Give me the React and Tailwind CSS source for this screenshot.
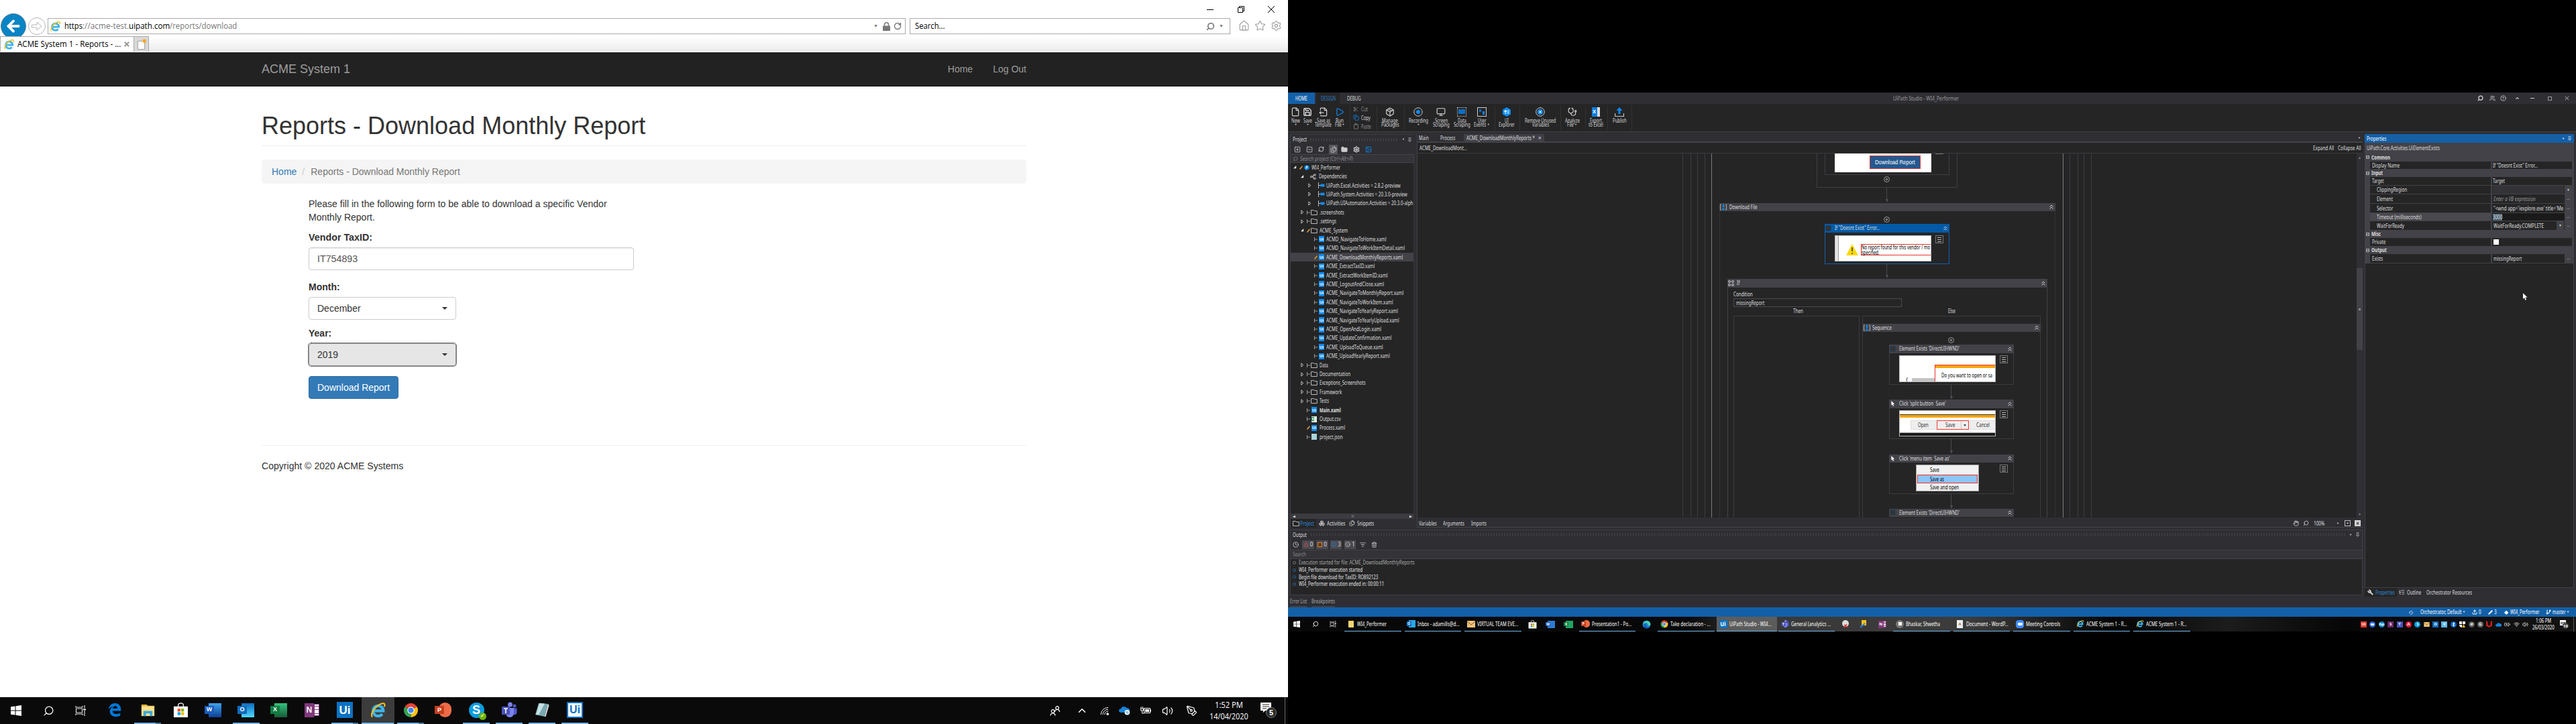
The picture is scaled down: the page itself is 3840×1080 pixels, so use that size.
import React, { useLayoutEffect, useRef, useState } from "react";
import {
  Home, Star, Settings, RotateCw, Search, File, Save, Play, Scissors, Copy, Clipboard,
  Package, Circle, Monitor, Stethoscope, Upload, Folder,
  RefreshCw, Trash2, Clock, AlertTriangle, Info, ListFilter, Wrench, ListTree, GitBranch, Pencil,
  Hand, CircleHelp, Pin, SquarePlus, SquareMinus, Image, Boxes, Users, Network, Files,
  ChevronUp, Volume2, Wifi, BatteryCharging, PenTool, FileOutput, ArrowLeft, Bluetooth,
} from "lucide-react";

/* Single line of text whose glyphs are condensed to a given width. */
function T({ w, className = "", children }) {
  const ref = useRef(null);
  const [s, setS] = useState(1);
  useLayoutEffect(() => {
    const n = ref.current.offsetWidth;
    if (n) setS(w / n);
  }, [w]);
  return (
    <span className={"inline-block shrink-0 overflow-visible text-left " + className} style={{ width: w }}>
      <span ref={ref} className="inline-block origin-left whitespace-pre" style={{ transform: `scaleX(${s})` }}>{children}</span>
    </span>
  );
}

/* ---------- logos ---------- */
const IE = ({ className }) => (
  <svg viewBox="0 0 24 24" className={className} fill="none">
    <path d="M5.500 12.800H19.500A7.300 7.300 0 1 0 18 17.400" stroke="#3fb4ea" strokeWidth="4" />
    <path d="M4 21.500C0 18 9 4 18.500 2.200c4-.6 3.300 2.800 2.500 4.800" stroke="#f6c21c" strokeWidth="2" />
  </svg>
);
const OldEdge = ({ className }) => (
  <svg viewBox="0 0 24 24" className={className}>
    <path fill="#0078d7" d="M2 10.500C3 4.500 7.500 1 12.500 1 18.500 1 22 5.500 22 11v2.500H8.500c.2 3.500 3 5 6 5 2.500 0 4.500-.6 6.500-1.700v4.500c-2.300 1.200-4.700 1.700-7.200 1.700C8 23 4 19.500 4 14.500c0-3.300 2-6.300 5-8-1.500.2-4.700 1.300-7 4zM8.700 9.500h7.800c0-2.200-1.300-3.700-3.700-3.700-2.300 0-3.700 1.700-4.100 3.700z" />
  </svg>
);
const NewEdge = ({ className }) => (
  <svg viewBox="0 0 24 24" className={className}>
    <circle cx="12" cy="12" r="11" fill="#1b7fd0" />
    <path d="M2 9C5 1 19-1 23 10c0 4-3 6-8 5 2-3 0-7-5-7-4 0-7 1-8 4z" fill="#4bd0b0" />
    <path d="M9 13c0 6 6 9 12 6-3 4-8 5-12 3-4-3-5-11 2-13-1 1-2 2-2 4z" fill="#0c4fa0" />
  </svg>
);
const Chrome = ({ className }) => (
  <svg viewBox="0 0 24 24" className={className}>
    <path d="M12 12L2.500 6.500A11 11 0 0 1 21.500 6.500z" fill="#e54335" />
    <path d="M12 12L21.500 6.500A11 11 0 0 1 12 23z" fill="#fbc116" />
    <path d="M12 12L12 23A11 11 0 0 1 2.500 6.500z" fill="#34a353" />
    <circle cx="12" cy="12" r="5.400" fill="#fff" /><circle cx="12" cy="12" r="4.200" fill="#4286f4" />
  </svg>
);
const Win = ({ className }) => (
  <svg viewBox="0 0 16 16" className={className} fill="#fff">
    <path d="M0 2.300L6.500 1.400V7.500H0zM7.500 1.200L16 0V7.500H7.500zM0 8.500H6.500v6.100L0 13.700zM7.500 8.500H16V16L7.500 14.800z" />
  </svg>
);
const TaskView = ({ className }) => (
  <svg viewBox="0 0 16 16" className={className} fill="none" stroke="#ddd" strokeWidth="1.200">
    <path d="M1.500 5h9v6h-9zM1 1v2h10V1M1 15v-2h10v2M14 0v4M14 8v8" /><path d="M12.800 5.500h2.400v1.500h-2.400z" fill="#ddd" />
  </svg>
);
const Store = ({ className }) => (
  <svg viewBox="0 0 24 24" className={className}>
    <path d="M8 7V4q0-3 4-3t4 3v3" fill="none" stroke="#ddd" strokeWidth="1.500" />
    <path d="M1 6h22v17H1z" fill="#fff" />
    <path d="M7 9.500h4.500v4.500H7z" fill="#f25022" /><path d="M12.500 9.500H17v4.500h-4.500z" fill="#7fba00" />
    <path d="M7 15h4.500v4.500H7z" fill="#00a4ef" /><path d="M12.500 15H17v4.500h-4.500z" fill="#ffb900" />
  </svg>
);
const FolderLogo = ({ className }) => (
  <svg viewBox="0 0 24 24" className={className}>
    <path d="M2 3h8l2 2h10v15H2z" fill="#e9b93c" /><path d="M2 6h20v15H2z" fill="#fbe08b" />
    <path d="M5 21v-8h14v8h-4v-4H9v4z" fill="#39a9e0" />
  </svg>
);
const Skype = ({ className }) => (
  <div className={"relative flex items-center justify-center rounded-full bg-[#0a9de0] font-bold text-white " + className}>
    <span className="text-[18px] leading-none">S</span>
    <span className="absolute -bottom-[3px] -right-[3px] flex size-[11px] items-center justify-center rounded-full bg-[#6bb700] text-[8px] leading-none">✓</span>
  </div>
);
const Teams = ({ className }) => (
  <svg viewBox="0 0 24 24" className={className}>
    <circle cx="20" cy="6" r="2.500" fill="#5059c9" /><circle cx="13.500" cy="4" r="3.500" fill="#7b83eb" />
    <path d="M17 9.500h6.500V16q-1 4-5 3z" fill="#5059c9" /><path d="M8 9h11v8q-1 6-6 6t-6-6z" fill="#7b83eb" />
    <path d="M1 7h12v12H1z" fill="#4b53bc" /><path d="M4 10h6M7 10v7" stroke="#fff" strokeWidth="1.600" />
  </svg>
);
const Notepad = ({ className }) => (
  <svg viewBox="0 0 24 24" className={className}>
    <path d="M7 2l14 1-5 19L2 19z" fill="#7ba9b0" /><path d="M8 2l8 .5-9 17-4-.6z" fill="#c5e2e5" /><path d="M21 3l1.500 2-5 17-1.500 0z" fill="#e7e7e7" />
  </svg>
);
/* OneNote: white notebook with tabs behind a purple cover. */
const OneNote = ({ className }) => (
  <div className={"flex shrink-0 items-center " + className}>
    <span className="flex h-full w-[62%] items-center justify-center bg-[#80397b] font-bold leading-none text-white">N</span>
    <span className="flex h-[82%] w-[38%] flex-col justify-around border border-[#80397b] bg-white"><i className="h-px bg-[#80397b]" /><i className="h-px bg-[#80397b]" /><i className="h-px bg-[#80397b]" /></span>
  </div>
);
/* Office tile: coloured sheet behind a lettered square. */
const Office = ({ l, size, sheet, tag, letter, round = "" }) => (
  <div className={"flex shrink-0 items-center justify-end " + size}>
    <div className={"flex h-full w-[80%] items-center " + sheet + " " + round}>
      <div className={"-ml-[30%] flex h-[58%] w-[72%] shrink-0 items-center justify-center font-bold text-white " + tag}>
        <span className={"leading-none " + letter}>{l}</span>
      </div>
    </div>
  </div>
);
const Ui = ({ className }) => <span className={"flex shrink-0 items-center justify-center font-bold leading-none " + className}>Ui</span>;

/* ---------- left screen ---------- */
const leftTasks = [
  [<OldEdge className="size-[22px]" />, 0],
  [<FolderLogo className="size-[23px]" />, 2],
  [<Store className="size-[23px]" />, 0],
  [<Office l="W" size="h-[21px] w-6" sheet="bg-gradient-to-b from-[#41a5ee] to-[#103f91]" tag="bg-[#185abd]" letter="text-[9px]" />, 0],
  [<Office l="O" size="h-[21px] w-6" sheet="bg-gradient-to-b from-[#0f6cbd] to-[#50d9ff]" tag="bg-[#0f6cbd]" letter="text-[9px]" />, 1],
  [<Office l="X" size="h-[21px] w-6" sheet="bg-gradient-to-b from-[#33c481] to-[#185c37]" tag="bg-[#107c41]" letter="text-[9px]" />, 0],
  [<OneNote className="h-[21px] w-[22px] text-[12px]" />, 0],
  [<Ui className="size-6 bg-[#0a72c4] text-[17px] text-white" />, 2],
  [<IE className="size-[25px]" />, 3],
  [<Chrome className="size-[23px]" />, 2],
  [<Office l="P" size="h-[22px] w-6" sheet="bg-[#ed6c47]" round="rounded-full" tag="bg-[#c43e1c]" letter="text-[9px]" />, 0],
  [<Skype className="size-[23px]" />, 1],
  [<Teams className="size-6" />, 1],
  [<Notepad className="size-6" />, 1],
  [<Ui className="size-6 border-2 border-[#0a72c4] bg-white text-[16px] text-[#0a72c4]" />, 1],
];

function Browser() {
  return (
    <section className="flex h-[1080px] w-[1920px] shrink-0 flex-col bg-white font-['Liberation_Sans',Arial,sans-serif] text-[14px] leading-5 text-[#333]">
      <div className="h-[54px] shrink-0 overflow-hidden font-['Open_Sans',sans-serif] text-black">
        <div className="flex h-[27px] items-center justify-end pr-[2px]">
          <span className="flex w-[45.500px] justify-center"><svg viewBox="0 0 10 10" className="size-[10px]"><path d="M0 5.500h10" stroke="#000" /></svg></span>
          <span className="flex w-[45.500px] justify-center"><svg viewBox="0 0 10 10" className="size-[10px]" fill="none" stroke="#000"><path d="M.5 2.500h7v7h-7zM2.500 2.500v-2h7v7h-2" /></svg></span>
          <span className="flex w-[45.500px] justify-center"><svg viewBox="0 0 10 10" className="size-[10px]"><path d="M0 0l10 10M10 0L0 10" stroke="#000" /></svg></span>
        </div>
        <div className="flex h-[27px] items-start">
          <span className="-mt-[7px] ml-[1px] flex size-[38px] shrink-0 items-center justify-center rounded-full border border-[#5a7f95] bg-[#0a84c4] text-white"><ArrowLeft size={26} strokeWidth={3.500} /></span>
          <span className="-mt-[1px] ml-[3px] flex size-[26px] shrink-0 items-center justify-center rounded-full border border-[#b5b5b5] text-[#b5b5b5]">
            <svg viewBox="0 0 16 16" className="size-4" fill="none" stroke="currentColor"><path d="M.5 6h7.500V2l7 6-7 6v-4H.5z" /></svg>
          </span>
          <div className="ml-[3px] flex h-6 w-[1279px] shrink-0 items-center border border-[#ababab] text-[12px]">
            <IE className="ml-[2px] size-[17px]" />
            <T w={27} className="ml-[5px]">https</T>
            <T w={69} className="text-[#777]">://acme-test.</T>
            <T w={61}>uipath.com</T>
            <T w={100} className="text-[#777]">/reports/download</T>
            <div className="flex-1" />
            <span className="text-[7px] text-[#777]">▼</span>
            <svg viewBox="0 0 11 13" className="ml-[7px] h-[13px] w-[11px]"><path d="M0 5.500h11V13H0z" fill="#777" /><path d="M2.500 6V3.500q0-2.700 3-2.700t3 2.700V6" fill="none" stroke="#777" strokeWidth="1.500" /></svg>
            <RotateCw className="ml-[5px] mr-[5px] text-[#777]" size={12} strokeWidth={3} />
          </div>
          <div className="ml-[6px] flex h-6 w-[478px] shrink-0 items-center border border-[#ababab] text-[12px]">
            <T w={44} className="ml-[7px]">Search...</T>
            <div className="flex-1" />
            <Search className="-scale-x-100 text-[#777]" size={13} strokeWidth={3} />
            <span className="ml-[6px] mr-[9px] text-[7px] text-[#777]">▼</span>
          </div>
          <div className="ml-[12px] mt-[3px] flex gap-[7px] text-[#999]">
            <Home size={17} strokeWidth={1.500} /><Star size={17} strokeWidth={1.500} /><Settings size={17} strokeWidth={1.500} />
          </div>
        </div>
      </div>
      <div className="flex h-6 shrink-0 border-b border-white bg-gradient-to-b from-white to-[#ebebeb] font-['Open_Sans',sans-serif] text-[12px] text-black">
        <div className="flex w-[200px] items-center border border-b-0 border-[#ababab] bg-white">
          <IE className="ml-1 size-[17px]" />
          <T w={154} className="ml-1">ACME System 1 - Reports - ...</T>
          <svg viewBox="0 0 10 10" className="ml-[5px] size-[8px]"><path d="M1 1l8 8M9 1L1 9" stroke="#999" strokeWidth="2.500" /></svg>
        </div>
        <div className="flex w-[22px] items-center justify-center border border-b-0 border-l-0 border-[#ababab] bg-[#d9d9d9]">
          <svg viewBox="0 0 16 18" className="h-[17px] w-[15px]"><path d="M2.500 3.500h11v13h-11z" fill="#fff" stroke="#999" /><path d="M13 0v7M9.500 3.500h7M10.500 1l5 5M15.500 1l-5 5" stroke="#f5a623" strokeWidth="1.300" /></svg>
        </div>
      </div>
      <nav className="flex h-[51px] shrink-0 items-center border-b border-[#080808] bg-[#222] px-[390px] text-[#9d9d9d]">
        <span className="text-[18px]">ACME System 1</span>
        <span className="ml-auto">Home</span><span className="ml-[30px]">Log Out</span>
      </nav>
      <main className="mx-[390px] flex-1">
        <h1 className="mt-[39px] border-b border-[#eee] pb-[9px] text-[36px] leading-[40px]">Reports - Download Monthly Report</h1>
        <div className="mt-5 flex h-9 items-center rounded bg-[#f5f5f5] px-[15px]">
          <span className="text-[#337ab7]">Home</span><span className="px-[9px] pl-[8px] text-[#ccc]">/</span><span className="text-[#777]">Reports - Download Monthly Report</span>
        </div>
        <form className="ml-[70px] mt-5 flex flex-col items-start">
          <p className="w-[455px]"><T w={445}>Please fill in the following form to be able to download a specific Vendor</T><br />Monthly Report.</p>
          <label className="mt-[10px] font-bold"><T w={95}>Vendor TaxID:</T></label>
          <div className="mt-[5px] flex h-[34px] w-[485px] items-center rounded border border-[#ccc] px-3 text-[#555] shadow-[inset_0_1px_1px_rgba(0,0,0,0.075)]"><T w={60}>IT754893</T></div>
          <label className="mt-[15px] font-bold">Month:</label>
          <div className="mt-[5px] flex h-[34px] w-[220px] items-center justify-between rounded border border-[#ccc] px-3">
            December<span className="border-x-4 border-t-4 border-x-transparent border-t-[#333]" />
          </div>
          <label className="mt-[10px] font-bold">Year:</label>
          <div className="mt-[5px] flex h-[34px] w-[220px] items-center justify-between rounded border border-[#8c8c8c] bg-[#e6e6e6] px-3 outline-1 outline-dotted outline-black">
            2019<span className="border-x-4 border-t-4 border-x-transparent border-t-[#333]" />
          </div>
          <div className="mt-[15px] flex h-[34px] w-[134px] items-center justify-center rounded border border-[#2e6da4] bg-[#337ab7] text-white"><T w={108}>Download Report</T></div>
        </form>
        <footer className="mt-[69px] border-t border-[#eee] pt-5"><T w={211}>Copyright © 2020 ACME Systems</T></footer>
      </main>
      <div className="flex h-10 shrink-0 bg-[#0a0a0a] text-white">
        <span className="flex w-12 items-center justify-center"><Win className="size-4" /></span>
        <span className="flex w-12 items-center justify-center"><Search size={17} strokeWidth={1.800} className="-scale-x-100" /></span>
        <span className="flex w-[50.500px] items-center pl-4"><TaskView className="size-4" /></span>
        {leftTasks.map(([icon, st], i) => (
          <span key={i} className={"flex w-[49px] flex-col items-center " + (st === 3 ? "bg-[#3c3c3c]" : "")}>
            <span className="flex h-[38px] items-center">{icon}</span>
            {st > 0 && <span className={"flex h-[2px] " + (st === 3 ? "w-[48px]" : "w-10") + " bg-[#76b9ed]"}>{st === 2 && <span className="ml-auto h-full w-2 bg-[#4a7599]" />}</span>}
          </span>
        ))}
        <div className="ml-auto flex items-center">
          <svg viewBox="0 0 15 15" className="size-[15px]" fill="none" stroke="#fff" strokeWidth="1.200"><circle cx="11" cy="3" r="2.300" /><path d="M7.500 9a3.500 3.500 0 0 1 7 0" /><circle cx="4.500" cy="8" r="2.300" /><path d="M1 14.500a3.500 3.500 0 0 1 7 0" /></svg>
          <ChevronUp className="ml-[24px]" size={18} strokeWidth={2} />
          <svg viewBox="0 0 14 14" className="ml-[18px] size-[13px]" fill="none" stroke="#fff"><path d="M1 13A12 12 0 0 1 13 1.500M4 13a9 9 0 0 1 9-8.500M7 13a6 6 0 0 1 6-5.500" /><circle cx="12" cy="12" r="1.500" fill="#fff" /></svg>
          <svg viewBox="0 0 18 14" className="ml-[15px] h-[14px] w-[17px]"><path d="M3 10a3 3 0 0 1 0-6 5 5 0 0 1 9-1 4 4 0 0 1 5 4v3z" fill="#1683d8" /><circle cx="13" cy="10" r="4" fill="#fff" /><path d="M10.500 9h4M15.500 11h-4" stroke="#1683d8" /></svg>
          <svg viewBox="0 0 17 14" className="ml-[15px] h-[14px] w-[17px]" fill="none" stroke="#fff"><path d="M5.500 3.500h9v7h-9zM15.500 5.500v3M1 1v3M3.500 1v3M.5 4h4v3h-4zM2.500 7v4h3" /><path d="M7 5h6v4H7z" fill="#fff" stroke="none" /></svg>
          <Volume2 className="ml-[15px]" size={17} strokeWidth={1.700} />
          <PenTool className="ml-[19px]" size={17} strokeWidth={1.700} />
          <div className="ml-[18px] flex w-[58px] flex-col items-center font-['Open_Sans',sans-serif] text-[12px] leading-[17px]">
            <T w={42}>1:52 PM</T><T w={58}>14/04/2020</T>
          </div>
          <div className="relative ml-[18px] mr-[11px] h-6 w-[25px]">
            <svg viewBox="0 0 16 15" className="mt-0 h-[15px] w-4"><path d="M0 0h16v12H7l-3 3v-3H0z" fill="#fff" /><path d="M3 3h10M3 6h10M3 9h6" stroke="#222" /></svg>
            <span className="absolute left-[8px] top-[7px] flex size-4 items-center justify-center rounded-full border border-[#777] bg-[#2a2a2a] text-[11px] font-bold">5</span>
          </div>
          <span className="mr-1 h-10 w-px bg-[#666]" />
        </div>
      </div>
    </section>
  );
}

/* ---------- ribbon ---------- */
const B = "text-[#0d8bf0]";
function Rib({ className, icon, l1, w1, l2, w2, caret }) {
  return (
    <div className={"flex shrink-0 flex-col items-center pt-[4px] " + className}>
      <div className="flex h-[15px] items-center">{icon}</div>
      <T w={w1} className="mt-px h-[7px] leading-[9px]">{l1}</T>
      <div className="flex h-[8px] items-center">
        {l2 && <T w={w2} className="leading-[8px]">{l2}</T>}
        {caret && <span className="ml-px text-[4px] leading-none">▼</span>}
      </div>
    </div>
  );
}
const Sep = ({ className }) => <span className={"-mr-px h-9 w-px shrink-0 self-center bg-[#333337] " + className} />;

function Ribbon() {
  return (
    <div className="flex h-[42px] shrink-0 border-b border-[#434348] bg-[#252526] text-[#d4d4d4]">
      <Rib className="ml-[2px] w-[18px]" icon={<File size={14} strokeWidth={2} />} l1="New" w1={13} caret />
      <Rib className="w-[18px]" icon={<Save size={14} strokeWidth={2.500} />} l1="Save" w1={12.5} caret />
      <Rib className="ml-px w-[27px]" icon={<FileOutput size={14} strokeWidth={2} />} l1="Save as" w1={20} l2="Template" w2={25} />
      <Rib className="ml-px w-5" icon={<Play className={B} size={14} strokeWidth={2} />} l1="Run" w1={12} l2="File" w2={10} caret />
      <Sep className="ml-[5px]" />
      <div className="ml-[5px] flex w-[35px] flex-col justify-center gap-[3px] leading-[10px]">
        <span className="flex items-center text-[#909090]"><Scissors size={8} className="mr-[4px]" /><T w={10}>Cut</T></span>
        <span className="flex items-center"><Copy size={9} className={"mr-[3px] " + B} /><T w={14}>Copy</T></span>
        <span className="flex items-center text-[#909090]"><Clipboard size={9} className="mr-[3px]" /><T w={15}>Paste</T></span>
      </div>
      <Sep className="ml-0" />
      <Rib className="ml-[5px] w-[30px]" icon={<Package size={14} strokeWidth={2} />} l1="Manage" w1={24} l2="Packages" w2={26.500} />
      <Sep className="ml-[6px]" />
      <Rib className="ml-[4px] w-[34px]" icon={<svg viewBox="0 0 14 14" className="size-[14px]"><circle cx="7" cy="7" r="6.200" fill="none" stroke="#ccc" /><circle cx="7" cy="7" r="3" fill="#0d8bf0" /></svg>} l1="Recording" w1={29} caret />
      <Rib className="ml-[3px] w-[28px]" icon={<Monitor size={14} strokeWidth={2} />} l1="Screen" w1={19} l2="Scraping" w2={25} />
      <Rib className="ml-[3px] w-[28px]" icon={<span className="flex size-[14px] items-center justify-center border border-dotted border-[#ccc]"><span className="h-[7px] w-[10px] bg-[#0d6fc0]" /></span>} l1="Data" w1={13} l2="Scraping" w2={25} />
      <Rib className="ml-[3px] w-[26px]" icon={<span className="flex size-[14px] items-end justify-end border border-[#ccc] p-[2px]"><span className="mb-auto mr-[2px] size-[4px] bg-[#0d6fc0]" /><span className="size-[5px] bg-[#0d8bf0]" /></span>} l1="User" w1={13} l2="Events" w2={18.500} caret />
      <Sep className="ml-[6px]" />
      <Rib className="ml-[5px] w-[26px]" icon={<svg viewBox="0 0 14 14" className="size-[14px]"><path d="M7 0l6 3.500v7L7 14l-6-3.500v-7z" fill="#0d8bf0" /><path d="M4 5h2.500v2H4zM8 5h2.500M8 7h2.500M4 9h2.500M8 9h2.500" stroke="#fff" fill="#fff" /></svg>} l1="UI" w1={6} l2="Explorer" w2={23.500} />
      <Sep className="ml-[6px]" />
      <Rib className="ml-[5px] w-[52px]" icon={<svg viewBox="0 0 14 14" className="size-[14px]"><circle cx="7" cy="7" r="6.300" fill="none" stroke="#ccc" /><circle cx="7" cy="7" r="4.300" fill="#0d8bf0" /><path d="M5.200 5.200l3.600 3.600M8.800 5.200L5.200 8.800" stroke="#fff" /></svg>} l1="Remove Unused" w1={46} l2="Variables" w2={25} />
      <Sep className="ml-[4px]" />
      <Rib className="ml-[5px] w-[25px]" icon={<Stethoscope size={14} strokeWidth={2} />} l1="Analyze" w1={22} l2="File" w2={10} caret />
      <Sep className="ml-[7px]" />
      <Rib className="ml-[4px] w-[23px]" icon={<span className="flex h-[14px] w-3 bg-[#ddd]"><span className="flex h-full w-2 items-center justify-center bg-[#0d7fe0] text-[7px] font-bold text-white">X</span></span>} l1="Export" w1={18} l2="to Excel" w2={22} />
      <Sep className="ml-[6px]" />
      <Rib className="ml-[6px] w-6" icon={<svg viewBox="0 0 14 14" className="size-[14px]"><path d="M7 0l4.500 5h-3v5h-3V5h-3z" fill="#0d8bf0" /><path d="M.5 9v4.500h13V9" fill="none" stroke="#ccc" strokeWidth="1.200" /></svg>} l1="Publish" w1={21} />
      <Sep className="ml-[6px]" />
    </div>
  );
}

/* ---------- project panel ---------- */
const tree = [
  ["root", "WI4_Performer", 43], ["dep", "Dependencies", 41.5],
  ["pkg", "UiPath.Excel.Activities = 2.8.2-preview", 110.7], ["pkg", "UiPath.System.Activities = 20.3.0-preview", 120.7], ["pkg", "UiPath.UIAutomation.Activities = 20.3.0-alph", 129.5],
  ["dir", ".screenshots", 36.5], ["dir", ".settings", 25], ["open", "ACME_System", 42],
  ["f", "ACMD_NavigateToHome.xaml", 89.6], ["f", "ACMD_NavigateToWorkItemDetail.xaml", 116.8], ["sel", "ACME_DownloadMonthlyReports.xaml", 114.3],
  ["f", "ACME_ExtractTaxID.xaml", 72], ["f", "ACME_ExtractWorkItemID.xaml", 91.5], ["f", "ACME_LogoutAndClose.xaml", 86.5],
  ["f", "ACME_NavigateToMonthlyReport.xaml", 115], ["f", "ACME_NavigateToWorkItem.xaml", 99.5], ["f", "ACME_NavigateToYearlyReport.xaml", 107],
  ["f", "ACME_NavigateToYearlyUpload.xaml", 109], ["f", "ACME_OpenAndLogin.xaml", 82], ["f", "ACME_UpdateConfirmation.xaml", 97.5],
  ["f", "ACME_UploadToQueue.xaml", 85], ["f", "ACME_UploadYearlyReport.xaml", 95],
  ["dir", "Data", 13], ["dir", "Documentation", 46.5], ["dir", "Exceptions_Screenshots", 69], ["dir", "Framework", 33], ["dir", "Tests", 14],
  ["main", "Main.xaml", 32], ["csv", "Output.csv", 32], ["proc", "Process.xaml", 38], ["json", "project.json", 34.5],
];
const Tri = ({ open }) => (
  <svg viewBox="0 0 6 8" className="h-[7px] w-[5px] shrink-0">{open ? <path d="M5 1v5H0z" fill="#eee" /> : <path d="M1 .8L4.500 4 1 7.200z" fill="none" stroke="#ddd" />}</svg>
);
const Tick = () => <svg viewBox="0 0 5 6" className="h-[6px] w-[5px] shrink-0"><path d="M.5 0v6M.5 3H5" stroke="#999" /></svg>;
const Pen = () => <svg viewBox="0 0 5 6" className="h-[6px] w-[5px] shrink-0"><path d="M.5 5.500L4.500 .8" stroke="#e8a33a" strokeWidth="1.500" /></svg>;
const Fold = () => <svg viewBox="0 0 10 8" className="h-[8px] w-[10px] shrink-0"><path d="M.5 7.500V.6h4l.8 1h4v5.900z" fill="none" stroke="#bbb" /></svg>;
const SmUi = () => <Ui className="h-[9px] w-[8px] bg-[#0d8bf0] text-[6px] text-white" />;

function Row({ kind, label, w }) {
  const file = kind === "f" || kind === "sel";
  return (
    <div className={"flex h-[13.420px] shrink-0 items-center overflow-hidden " + (kind === "sel" ? "bg-[#434248]" : "")}>
      {kind === "root" && <><span className="ml-[4px] flex"><Tri open /></span><span className="ml-[4px] flex"><Pen /></span><svg viewBox="0 0 9 9" className="ml-[2px] mr-[3px] size-[8px]"><path d="M4.500 0l4 2.200v4.600l-4 2.200-4-2.200V2.200z" fill="#0d8bf0" /><path d="M3.500 7V2.500h2v2h-2" stroke="#fff" fill="none" /></svg></>}
      {kind === "dep" && <><span className="ml-[15px] flex"><Tri open /></span><Network size={9} className="ml-[9px] mr-[3.500px] -rotate-90" /></>}
      {kind === "pkg" && <><span className="ml-[26px] flex"><Tri /></span><svg viewBox="0 0 10 9" className="ml-[10px] mr-[2px] h-[9px] w-[10px] shrink-0"><path d="M.5 0v9M.5 4.500H4" stroke="#bbb" /><path d="M3.500 2.500h6v4h-6z" fill="#0d8bf0" /></svg></>}
      {(kind === "dir" || kind === "open") && <><span className="ml-[15px] flex"><Tri open={kind === "open"} /></span><span className="ml-[4px] mr-px flex">{kind === "open" ? <Pen /> : <Tick />}</span><Fold /><span className="w-[2.500px] shrink-0" /></>}
      {file && <><span className="ml-[35px] mr-[2px] flex">{kind === "sel" ? <Pen /> : <Tick />}</span><SmUi /><span className="w-[3px] shrink-0" /></>}
      {["main", "csv", "proc", "json"].includes(kind) && (
        <><span className="ml-[24px] mr-[2px] flex">{kind === "proc" ? <Pen /> : <Tick />}</span>
          {kind === "csv" ? <span className="flex h-[9px] w-[8px] items-center bg-[#dfeee6] text-[6px] font-bold text-white"><span className="bg-[#107c41] leading-[6px]">X</span></span>
            : kind === "json" ? <span className="h-[9px] w-[8px] bg-[#a9d3da]" /> : <SmUi />}
          <span className="w-[3.500px] shrink-0" /></>
      )}
      <T w={w} className={kind === "main" ? "font-bold" : ""}>{label}</T>
    </div>
  );
}
const Dots = ({ className }) => <span className={"h-[5px] flex-1 bg-[radial-gradient(circle,#55555a_0.700px,transparent_0.900px)] bg-[size:4px_2.500px] " + className} />;

function ProjectPanel() {
  return (
    <div className="ml-[3px] mt-[3px] flex w-[185px] shrink-0 flex-col border-l border-[#434348]">
      <div className="flex h-[15px] items-center border-t border-[#3a3a3f] pl-[3px]">
        <T w={21}>Project</T><Dots className="ml-[4px]" /><span className="ml-[5px] text-[4px]">▼</span><Pin size={7} className="ml-[4px] mr-[3px]" />
      </div>
      <div className="flex h-[15px] items-center pl-[5px] text-[#d0d0d0]">
        <span className="flex w-[18px]"><SquarePlus size={10} /></span><span className="flex w-[18px]"><SquareMinus size={10} /></span><span className="flex w-[16px]"><RefreshCw size={9} strokeWidth={2.500} /></span>
        <span className="flex h-[14px] w-[13px] items-center justify-center bg-[#55555b]"><Files size={10} /></span>
        <span className="ml-[5px] flex w-[18px]"><Folder size={10} fill="#ccc" /></span><span className="flex w-[18px]"><Settings size={10} strokeWidth={3} /></span><Image size={10} className={B} />
      </div>
      <div className="flex h-[13px] items-center border border-l-0 border-[#434348] bg-[#333338] italic text-[#8a8a8a]"><Search size={8} className="ml-[3px] mr-[3px] -scale-x-100" /><T w={79}>Search project (Ctrl+Alt+P)</T></div>
      <div className="flex flex-1 flex-col overflow-hidden border-r border-[#333338] bg-[#252526]">
        {tree.map(([k, l, w], i) => <Row key={i} kind={k} label={l} w={w} />)}
      </div>
      <div className="flex h-[8px] items-center justify-between bg-[#3b3b40] px-[3px] text-[5px] leading-none"><span>◀</span><span className="flex gap-px"><i className="h-[4px] w-px bg-[#777]" /><i className="h-[4px] w-px bg-[#777]" /></span><span>▶</span></div>
      <div className="flex h-[13px] items-center">
        <div className="flex h-full w-[38px] items-center bg-[#252526]"><span className="ml-[3px] mr-[1px] flex"><Fold /></span><T w={21} className="text-[#2e8ad8]">Project</T></div>
        <Boxes size={9} className="ml-[4px] mr-[3px]" /><T w={27}>Activities</T>
        <Files size={9} className="ml-[6px] mr-[3px]" /><T w={25}>Snippets</T>
      </div>
    </div>
  );
}

/* ---------- workflow canvas: nodes placed by page position ---------- */
const OX = 2112, OY = 229;
const Box = ({ x, y, w, h, className = "", children }) => (
  <div className={"absolute " + className} style={{ left: x - OX, top: y - OY, width: w, height: h }}>{children}</div>
);
const Chev = () => <svg viewBox="0 0 6 7" className="h-[7px] w-[6px]" fill="none" stroke="#ccc"><path d="M.5 3.500L3 1l2.500 2.500M.5 6.500L3 4l2.500 2.500" /></svg>;
const Head = ({ x, y, w, label, tw, icon, blue }) => (
  <Box x={x} y={y} w={w} h={12.5} className={"flex items-center pr-[3px] " + (blue ? "bg-[#045aa6]" : "bg-[#434248]")}>
    <span className="flex w-[14.500px] shrink-0 pl-px">{icon}</span><T w={tw}>{label}</T><span className="ml-auto"><Chev /></span>
  </Box>
);
const Plus = ({ x, y }) => <Box x={x - 4.5} y={y - 4.5} w={9} h={9}><svg viewBox="0 0 9 9" className="size-[9px]" fill="none" stroke="#999"><circle cx="4.500" cy="4.500" r="4" /><path d="M4.500 2.500v4M2.500 4.500h4" /></svg></Box>;
const Arrow = ({ x, y, h }) => <Box x={x - 2.5} y={y} w={5} h={h} className="flex flex-col items-center"><span className="w-px flex-1 bg-[#4a4a4e]" /><span className="border-x-[2.500px] border-t-[5px] border-x-transparent border-t-[#505055]" /></Box>;
const Menu = ({ x, y }) => <Box x={x} y={y} w={12} h={12} className="flex flex-col justify-center gap-[2px] border border-[#777] px-[2px]"><span className="h-px bg-[#bbb]" /><span className="h-px bg-[#bbb]" /><span className="h-px bg-[#bbb]" /></Box>;
const SeqI = () => <svg viewBox="0 0 10 10" className="size-[10px]"><path d="M2 1H.5v8H2M8 1h1.500v8H8" stroke="#aaa" fill="none" /><path d="M4 .5h2v3h1L5 5.500 3 3.500h1zM3.500 6.500h3v3h-3z" fill="#0d8bf0" /></svg>;
const ElI = () => <svg viewBox="0 0 10 10" className="size-[9px]"><path d="M1 1h8v8H1z" stroke="#1d3d5c" fill="#333" /></svg>;
const Ptr = ({ className }) => <svg viewBox="0 0 8 12" className={className}><path d="M0 0v10l2.300-2.200L4 12l1.800-.8L4 7.200h3.500z" fill="#fff" /></svg>;
const lines = [[2507, 0], [2519, 0], [2528.500, 0], [2540, 0], [2549.500, 1], [3074, 1], [3084, 0], [3095.500, 0], [3105, 0], [3116, 0]];

function Canvas() {
  return (
    <div className="relative h-[543px] w-[1400px] shrink-0 overflow-hidden">
      {lines.map(([x, b], i) => <Box key={i} x={x} y={229} w={1} h={543} className={b ? "bg-[#7c7c7c]" : "bg-[#3c3c40]"} />)}
      <Box x={2707} y={220} w={210} h={60} className="border border-[#3f3f44]" />
      <Box x={2719} y={220} w={186} h={40.5} className="border border-[#3f3f44]" />
      <Box x={2733.5} y={229} w={144.5} h={28} className="bg-white">
        <div className="ml-[52px] mt-[3px] flex h-5 w-[76px] items-center justify-center border border-[#e8352d] bg-[#25598f] font-['Liberation_Sans',sans-serif] text-[8.500px] text-white"><T w={60}>Download Report</T></div>
      </Box>
      <Menu x={2884} y={218} />
      <Plus x={2811.5} y={267.5} />
      <Arrow x={2811.5} y={280} h={22} />
      <Box x={2562} y={303} w={500.5} h={480} className="border border-[#333337]" />
      <Head x={2562} y={302.5} w={500.5} label="Download File" tw={41.6} icon={<SeqI />} />
      <Plus x={2811.5} y={327.5} />
      <Box x={2719} y={334} w={185.5} h={60} className="border border-[#1460a8]" />
      <Head x={2719} y={334} w={185.5} label={'If "Doesnt Exist" Error...'} tw={67} icon={<ElI />} blue />
      <Box x={2733.5} y={351} w={144.5} h={39} className="overflow-hidden border border-[#bbb] bg-white text-black">
        <div className="flex h-full items-center">
          <span className="h-full w-[5px] shrink-0 border-r border-[#999] bg-[#e4e4e4]" />
          <svg viewBox="0 0 18 17" className="ml-[11px] mt-[4px] h-[17px] w-[18px] shrink-0"><path d="M9 0l9 17H0z" fill="#ffd800" /><path d="M9 5v6M9 13v2" stroke="#333" strokeWidth="1.500" /></svg>
          <div className="ml-[4px] mt-[4px] flex h-[17px] w-[110px] shrink-0 flex-col border border-[#e8352d] leading-[7.500px]"><T w={102}>No report found for this vendor / mo</T><T w={27}>specified.</T></div>
        </div>
      </Box>
      <Menu x={2884} y={351} />
      <Arrow x={2811.5} y={394} h={21} />
      <Box x={2573.5} y={416} w={477} h={370} className="border border-[#444449]" />
      <Head x={2573.5} y={416} w={477} label="If" tw={4} icon={<span className="grid grid-cols-2 gap-px"><i className="size-[4px] rounded-full border border-[#ccc]" /><i className="size-[4px] rounded-full border border-[#ccc]" /><i className="size-[4px] rounded-full border border-[#ccc]" /><i className="size-[4px] rounded-full border border-[#ccc]" /></span>} />
      <Box x={2583} y={433.5} w={60} h={10}><T w={29}>Condition</T></Box>
      <Box x={2583} y={445} w={250.5} h={13} className="flex items-center border border-[#4a4a50] pl-[3px]"><T w={42.5}>missingReport</T></Box>
      <Box x={2671.5} y={459} w={20} h={10}><T w={15}>Then</T></Box>
      <Box x={2902.5} y={459} w={20} h={10}><T w={11}>Else</T></Box>
      <Box x={2583} y={471} w={187.5} h={320} className="border border-[#3c3c40]" />
      <Box x={2774.5} y={471} w={266.5} h={320} className="border border-[#3c3c40]" />
      <Head x={2775.5} y={482.5} w={265} label="Sequence" tw={29} icon={<SeqI />} />
      <Plus x={2907.5} y={507.5} />

      <Box x={2815} y={514} w={185.5} h={60} className="border border-[#3c3c40]" />
      <Head x={2815} y={514} w={185.5} label="Element Exists 'DirectUIHWND'" tw={90} icon={<ElI />} />
      <Box x={2829.5} y={530} w={144.5} h={40} className="flex items-end overflow-hidden border border-[#bbb] bg-white text-black">
        <span className="ml-[10px] h-[5px] w-[9px] text-[8px] leading-[6px]">(</span><span className="h-[5px] w-[36px] bg-[#c4c4c4]" />
        <div className="h-[25px] w-[90px] shrink-0 border-l border-t border-[#e8352d]"><div className="h-[4px] bg-[#f7a50c]" /><T w={76} className="ml-[9px] mt-[6px]">Do you want to open or sa</T></div>
      </Box>
      <Menu x={2980} y={530} />
      <Arrow x={2907.5} y={574} h={22} />

      <Box x={2815} y={596} w={185.5} h={59} className="border border-[#3c3c40]" />
      <Head x={2815} y={596} w={185.5} label="Click 'split button  Save'" tw={70} icon={<Ptr className="ml-[2px] h-[8px] w-[6px]" />} />
      <Box x={2829.5} y={612} w={144.5} h={39} className="flex flex-col overflow-hidden border border-[#bbb] bg-white text-black">
        <div className="mt-[5px] h-[5px] shrink-0 border-t border-[#333] bg-[#f7a50c]" />
        <div className="mt-[4px] flex h-[14px] shrink-0 gap-px pl-[16px] text-[#333]">
          <span className="flex w-[38px] shrink-0 items-center justify-center border border-[#ddd] bg-[#eee]"><T w={16}>Open</T></span>
          <span className="flex w-[48px] shrink-0 items-center border border-[#e8352d] bg-[#eee] pl-[12px]"><T w={14}>Save</T><span className="ml-[9px] h-full border-l border-[#ccc] pl-[3px] text-[5px] leading-[12px] text-black">▼</span></span>
          <span className="flex w-[48px] shrink-0 items-center border border-[#ddd] bg-[#eee] pl-[9px]"><T w={20}>Cancel</T></span>
        </div>
        <div className="mt-[4px] h-[7px] border-t border-[#999] bg-[#1a1a1a]" />
      </Box>
      <Menu x={2980} y={612} />
      <Arrow x={2907.5} y={655} h={22} />

      <Box x={2815} y={677.5} w={185.5} h={59} className="border border-[#3c3c40]" />
      <Head x={2815} y={677.5} w={185.5} label="Click 'menu item  Save as'" tw={76} icon={<Ptr className="ml-[2px] h-[8px] w-[6px]" />} />
      <Box x={2854.5} y={693} w={94.5} h={40} className="flex flex-col border border-[#999] bg-[#f1f1f1] text-black">
        <span className="flex h-[14px] items-center pl-[20px]"><T w={13.5}>Save</T></span>
        <span className="mx-px flex h-[13px] items-center border border-[#e8352d] bg-[#8ec5fb] pl-[18px]"><T w={21}>Save as</T></span>
        <span className="flex h-[11px] items-center pl-[20px]"><T w={43}>Save and open</T></span>
      </Box>
      <Menu x={2980} y={693} />
      <Arrow x={2907.5} y={737} h={22} />
      <Head x={2815} y={758.5} w={185.5} label="Element Exists 'DirectUIHWND'" tw={90} icon={<ElI />} />
    </div>
  );
}

function Editor() {
  return (
    <div className="ml-[4px] mt-[3px] flex w-[1410px] shrink-0 flex-col border-l border-[#3f3f44]">
      <div className="flex h-[11px] items-center">
        <T w={15} className="ml-[2px]">Main</T><T w={22.5} className="ml-[16.500px]">Process</T>
        <div className="ml-[13px] flex h-full w-[120px] items-center bg-[#3f3f46] pl-[4px]"><T w={102}>ACME_DownloadMonthlyReports *</T><span className="ml-[5px] leading-none">×</span></div>
        <span className="ml-auto mr-[3px] text-[4px]">▼</span>
      </div>
      <div className="h-[2px] bg-[#434248]" />
      <div className="flex h-4 items-center border-b border-[#3a3a3f] bg-[#252526] pl-[3px]">
        <T w={71}>ACME_DownloadMont...</T><T w={31} className="ml-auto">Expand All</T><T w={34.5} className="ml-[5.500px] mr-[3px]">Collapse All</T>
      </div>
      <div className="flex h-[543px] shrink-0 bg-[#252526]">
        <Canvas />
        <div className="flex w-[9px] flex-col items-center bg-[#2f2f34] text-[5px] leading-none text-[#888]">
          <span className="h-[171px] pt-[4px]">▲</span><span className="flex h-[122px] w-full items-center justify-center bg-[#434248]"><span className="size-[3px] bg-[#888]" /></span><span className="mt-auto pb-[2px]">▼</span>
        </div>
      </div>
      <div className="flex flex-1 items-center border-b border-[#434348] pl-[2px] pt-[3px]">
        <T w={26.5}>Variables</T><T w={32} className="ml-[9.500px]">Arguments</T><T w={23} className="ml-[10px]">Imports</T>
        <Hand size={9} className="ml-auto" /><Search size={9} className="ml-[6px] -scale-x-100" /><T w={16} className="ml-[7px]">100%</T><span className="ml-[18px] text-[4px]">▼</span>
        <span className="ml-[8px] flex size-[9px] items-center justify-center border border-[#bbb] text-[7px] leading-none">+</span><span className="ml-[6px] mr-[3px] flex size-[9px] items-center justify-center border border-[#ddd] bg-[#ccc] text-[8px] leading-none text-black">×</span>
      </div>
    </div>
  );
}

const Chip = ({ className, icon, n }) => <span className={"flex h-[13px] items-center justify-center gap-[2px] bg-[#4b4a50] " + className}>{icon}<span>{n}</span></span>;
function Output() {
  const log = [["Execution started for file: ACME_DownloadMonthlyReports", 173], ["WI4_Performer execution started", 95.5], ["Begin file download for TaxID: RO892123", 118], ["WI4_Performer execution ended in: 00:00:11", 127.5]];
  return (
    <div className="ml-[3px] mt-[3px] flex h-[98px] w-[1599px] shrink-0 flex-col border border-[#3f3f44]">
      <div className="flex h-[13px] shrink-0 items-center pl-[3px]"><T w={21}>Output</T><Dots className="ml-[5px] opacity-80" /><span className="ml-[4px] text-[4px]">▼</span><Pin size={7} className="ml-[5px] mr-[3px]" /></div>
      <div className="flex h-[16px] shrink-0 items-center pl-[3px]">
        <Clock size={9} />
        <Chip className="ml-[5px] w-[18px]" icon={<AlertTriangle size={8} className="text-[#e05561]" />} n="0" />
        <Chip className="ml-[3px] w-[18px]" icon={<span className="size-[7px] border border-[#d9822b] bg-[#5d3d17]" />} n="0" />
        <Chip className="ml-[3px] w-[17px]" icon={<Info size={8} className="text-[#2e8ad8]" />} n="3" />
        <Chip className="ml-[4px] w-[17px]" icon={<Info size={8} />} n="1" />
        <ListFilter size={9} className="ml-[6px]" /><Trash2 size={9} className="ml-[8px]" />
      </div>
      <div className="flex h-[14px] shrink-0 items-center border-y border-[#434348] bg-[#333338] pl-[3px] text-[#888]"><T w={19.500}>Search</T></div>
      <div className="flex-1 bg-[#252526]">
        {log.map(([t, w], i) => <div key={i} className={"flex h-[10.700px] items-center pl-[3px] " + (i ? "text-[#e0e0e0]" : "text-[#a8a8a8]")}><Circle size={5} className={i ? "text-[#2e6da8]" : "text-[#888]"} strokeWidth={4} /><T w={w} className="ml-[4px]">{t}</T></div>)}
      </div>
    </div>
  );
}

/* ---------- properties ---------- */
const Btn = ({ children }) => <span className="ml-[1px] flex h-full w-[11px] shrink-0 items-center justify-center bg-[#434248] text-[5px] leading-none">{children}</span>;
const Cat = ({ className, label, w }) => <div className={"flex items-center pl-[2px] font-bold " + className}><span className="mr-[3px] flex size-[5px] items-center border border-[#aaa]"><span className="h-px w-full bg-[#aaa]" /></span><T w={w}>{label}</T></div>;
const Prop = ({ className, label, w, sub, children, hot }) => (
  <div className={"flex pl-[8px] " + className}>
    <div className={"flex w-[180px] items-center " + (sub ? "pl-[10px] " : "pl-[3px] ") + (hot ? "bg-[#4a494f]" : "bg-[#252526]")}><T w={w}>{label}</T></div>
    <div className={"ml-[1.500px] flex w-[119.500px] items-center overflow-hidden pl-px " + (hot ? "bg-[#1a1a1a]" : "bg-[#252526]")}>{children}</div>
  </div>
);
function Properties() {
  return (
    <div className="ml-[3px] mt-[3px] flex h-[690px] w-[312px] shrink-0 flex-col">
      <div className="flex h-[13px] shrink-0 items-center bg-[#1360a8] pl-[3px] text-white"><T w={29.5}>Properties</T><Dots className="ml-[5px] opacity-70" /><span className="ml-[4px] text-[4px]">▼</span><Pin size={7} className="ml-[4px] mr-[3px]" /></div>
      <div className="shrink-0 bg-[#434248] pb-px">
        <div className="flex h-[15px] items-center pl-[3px]"><T w={109}>UiPath.Core.Activities.UiElementExists</T></div>
        <Cat className="h-[13px]" label="Common" w={28} />
        <Prop className="h-[11px]" label="Display Name" w={41}><T w={67}>If "Doesnt Exist" Error...</T></Prop>
        <Cat className="h-[12px]" label="Input" w={17} />
        <Prop className="h-[12px]" label="Target" w={17.5}><T w={18}>Target</T></Prop>
        <Prop className="mt-px h-[12px]" sub label="ClippingRegion" w={45}><span className="h-full flex-1 bg-[#333338]" /><Btn>▼</Btn></Prop>
        <Prop className="mt-px h-[13px]" sub label="Element" w={24}><T w={62.5} className="ml-px italic text-[#999]">Enter a VB expression</T><span className="flex-1" /><Btn>...</Btn></Prop>
        <Prop className="mt-px h-[13px]" sub label="Selector" w={24}><T w={104} className="ml-px">{'"<wnd app=\'iexplore.exe\' title=\'Me'}</T><span className="flex-1" /><Btn>...</Btn></Prop>
        <Prop className="mt-px h-[11px]" sub hot label="Timeout (milliseconds)" w={67}><T w={14} className="bg-[#4a6272]">3000</T><span className="flex-1" /><Btn>...</Btn></Prop>
        <Prop className="mt-px h-[13px]" sub label="WaitForReady" w={41}><T w={75} className="ml-px">WaitForReady.COMPLETE</T><span className="flex-1" /><Btn>▼</Btn><Btn>...</Btn></Prop>
        <Cat className="h-[12px]" label="Misc" w={14} />
        <Prop className="h-[12px]" label="Private" w={20}><span className="ml-px size-[8px] bg-white" /></Prop>
        <Cat className="h-[12px]" label="Output" w={23} />
        <Prop className="h-[13px]" label="Exists" w={16}><T w={42.5} className="ml-px">missingReport</T><span className="flex-1" /><Btn>...</Btn></Prop>
      </div>
      <div className="flex-1 border border-t-0 border-[#3f3f44] bg-[#252526]">
        <Ptr className="ml-[235px] mt-[44px] h-[11px] w-[7px]" />
      </div>
      <div className="flex h-[13px] shrink-0 items-center">
        <div className="flex h-full w-[48px] items-center bg-[#252526]"><Wrench size={9} className="ml-[4px] mr-[3px] -scale-x-100" fill="#ccc" /><T w={29} className="text-[#2e8ad8]">Properties</T></div>
        <ListTree size={9} className="ml-[3px] mr-[3px]" /><T w={21.5}>Outline</T><T w={68.5} className="ml-[7px]">Orchestrator Resources</T>
      </div>
    </div>
  );
}

/* ---------- right taskbar ---------- */
const Task = ({ className, icon, label, w, active }) => (
  <div className={"flex h-full shrink-0 flex-col " + (active ? "w-[90px] bg-[#5c5c5c] " : "w-[84.500px] ") + className}>
    <div className="flex flex-1 items-center pl-[4px]"><span className="mr-[3px] flex w-[12px] shrink-0 justify-center">{icon}</span><T w={w}>{label}</T></div>
    <span className="h-px w-full bg-[#76b9ed]" />
  </div>
);
const O = ({ l, sheet, tag, round }) => <Office l={l} size="h-[11px] w-[13px]" sheet={sheet} tag={tag} round={round} letter="text-[5px]" />;
const Mail = ({ className }) => <svg viewBox="0 0 12 10" className={className}><path d="M0 0h12v10H0z" fill="#efc27b" /><path d="M0 1l6 5 6-5" fill="none" stroke="#7a5520" /></svg>;
const tray = [
  ["Ui", "bg-[#e8382e]"], [<span className="block h-[3px] w-[5px] bg-white" />, "bg-[#2d6cdf] rounded-full"], ["hp", "bg-[#0d8ad0] rounded-full"], ["S", "bg-[#6b2a6e]"], ["T", "bg-[#4b53bc]"],
  ["A", "bg-[#e21b3c] rounded-full"], ["S", "bg-[#0a9de0] rounded-full"], [<Mail className="h-[7px] w-[9px]" />, ""], ["O", "bg-[#0f6cbd]"], ["V", "bg-[#5cb6e8]"],
  [<Bluetooth size={7} strokeWidth={3} />, "bg-[#0a63c9] rounded-full"], [<svg viewBox="0 0 9 9" className="size-[9px]"><path d="M0 0h4v4H0zM5 0h4v4H5zM0 5h4q0 3 0 4-4-1-4-4z" fill="#fff" /><path d="M6.500 4L9 9H4z" fill="#f6b51c" /></svg>, ""],
  ["⊘", "bg-[#555] rounded-full"], ["G", "bg-[#666] rounded-full"],
  [<svg viewBox="0 0 9 10" className="h-[10px] w-[9px]"><path d="M0 0l2.500 1.500V6l2 1.500 2-1.500V1.500L9 0v7.500L4.500 10 0 7.500z" fill="#c8201f" /></svg>, ""],
];
const Caret = ({ className }) => <span className={"w-[4px] text-[4px] " + className}>▼</span>;

function Studio() {
  return (
    <section className="flex h-[1080px] w-[1920px] shrink-0 flex-col bg-black pt-[138px] font-['Noto_Sans','Open_Sans',sans-serif] text-[8px] leading-[10px] text-[#dedede]">
      <div className="flex h-[17px] shrink-0 items-center bg-[#2e2e33]">
        <div className="flex h-full w-10 items-center justify-center bg-[#1360a8] text-white"><T w={18}>HOME</T></div>
        <div className="ml-[2px] flex h-full w-[35px] items-center justify-center bg-[#252526] text-[#2e7cc4]"><T w={22}>DESIGN</T></div>
        <T w={20.5} className="ml-[11px]">DEBUG</T>
        <T w={98} className="ml-[793px] text-[#999]">UiPath Studio - WI4_Performer</T>
        <span className="ml-auto flex items-center">
          <Search size={9} strokeWidth={3} className="-scale-x-100" /><Users size={9} className="ml-[9px]" /><CircleHelp size={9} className="ml-[7px]" /><ChevronUp size={7} strokeWidth={3.500} className="ml-[13px]" />
          <span className="ml-[16px] h-px w-[6px] bg-[#ccc]" /><span className="ml-[20px] size-[6px] border border-[#999]" />
          <svg viewBox="0 0 8 8" className="ml-[19px] mr-[10px] size-[7px]"><path d="M1 1l6 6M7 1L1 7" stroke="#ccc" /></svg>
        </span>
      </div>
      <Ribbon />
      <div className="flex h-[693px] shrink-0 bg-[#2e2e33]">
        <div className="flex w-[1602px] shrink-0 flex-col">
          <div className="flex h-[590px] shrink-0"><ProjectPanel /><Editor /></div>
          <Output />
        </div>
        <Properties />
      </div>
      <div className="flex h-4 shrink-0 bg-[#2e2e33] pl-[3px] text-[#a8a8a8]">
        <span className="flex flex-col border-b-2 border-[#434248] pt-[2px]"><T w={25}>Error List</T></span>
        <span className="ml-[7px] flex flex-col border-b-2 border-[#434248] pt-[2px]"><T w={35}>Breakpoints</T></span>
      </div>
      <div className="flex h-[14px] shrink-0 items-center bg-[#1360a8] text-white">
        <span className="ml-auto w-[8px] text-center text-[8px]">◇</span><T w={62} className="ml-[10px]">Orchestrator, Default</T><Caret className="ml-[1px]" />
        <Upload size={8} className="ml-[10px]" strokeWidth={3} /><T w={4} className="ml-[2px]">0</T><Pencil size={7} className="ml-[10px]" fill="#fff" /><T w={4} className="ml-[2px]">3</T>
        <span className="ml-[10px] w-[8px] text-center text-[8px]">◆</span><T w={43.5} className="ml-[1.500px]">WI4_Performer</T><GitBranch size={8} className="ml-[10px]" strokeWidth={3} /><T w={20} className="ml-[2px]">master</T><Caret className="ml-px mr-[10px]" />
      </div>
      <div className="flex h-[22px] shrink-0 items-center bg-[linear-gradient(90deg,#080808_0%,#080808_31%,#383838_36%,#3c3c3c_53%,#181818_60%,#050505_64%,#1c1c1c_73%,#060606_82%,#141414_100%)] text-white">
        <Win className="ml-[8px] size-[10px]" /><Search size={10} className="ml-[18px] -scale-x-100" /><TaskView className="ml-[16px] size-[10px]" />
        <Task className="ml-[12px]" icon={<span className="h-[10px] w-[8px] bg-[#f3d574]" />} label="WI4_Performer" w={44} />
        <Task className="ml-[5px]" icon={<O l="O" sheet="bg-[#28a8ea]" tag="bg-[#0f6cbd]" />} label="Inbox - adamills@d..." w={62.5} />
        <Task className="ml-[5px]" icon={<Mail className="h-[10px] w-[12px]" />} label="VIRTUAL TEAM EVE..." w={61.5} />
        <Store className="ml-[10px] size-[13px]" /><span className="ml-[14px] flex"><O l="W" sheet="bg-[#2b7cd3]" tag="bg-[#185abd]" /></span><span className="ml-[14px] flex"><O l="X" sheet="bg-[#21a366]" tag="bg-[#107c41]" /></span>
        <Task className="ml-[9px]" icon={<O l="P" sheet="bg-[#ed6c47]" tag="bg-[#c43e1c]" round="rounded-full" />} label="Presentation1 - Po..." w={59} />
        <NewEdge className="ml-[10px] size-[13px]" />
        <Task className="ml-[10px]" icon={<Chrome className="size-[12px]" />} label="Take declaration - ..." w={60} />
        <Task className="ml-[3px]" active icon={<Ui className="size-[12px] bg-[#0a72c4] text-[8px] text-white" />} label="UiPath Studio - WI4..." w={62.5} />
        <Task className="ml-[2px]" icon={<Teams className="size-[13px]" />} label="General (analytics ..." w={59} />
        <svg viewBox="0 0 12 12" className="ml-[10px] size-[12px]"><circle cx="6" cy="5" r="5" fill="#ddd" /><path d="M4 7l6 4M8 6l-4 5" stroke="#d33" strokeWidth="1.500" /></svg>
        <svg viewBox="0 0 12 12" className="ml-[15px] size-[12px]"><path d="M3 0h7v8H3z" fill="#f6c21c" /><path d="M1 11l7-6" stroke="#2a7de1" strokeWidth="2" /></svg>
        <OneNote className="ml-[16px] h-[11px] w-[12px] text-[6px]" />
        <Task className="ml-[10px]" icon={<span className="flex size-[12px] items-center justify-center rounded-full bg-[#777]"><span className="size-[5px] bg-white" /></span>} label="Bhaskar, Shwetha" w={51} />
        <Task className="ml-[5px]" icon={<span className="flex h-[12px] w-[9px] items-center justify-center bg-[#e9f1fa] text-[6px] font-bold text-[#c06a1a]">A</span>} label="Document - WordP..." w={62.5} />
        <Task className="ml-[5px]" icon={<span className="flex size-[12px] items-center justify-center rounded-[4px] bg-[#3f8cff]"><span className="h-[4px] w-[7px] rounded-[1px] bg-white" /></span>} label="Meeting Controls" w={51.5} />
        <Task className="ml-[5px]" icon={<IE className="size-[13px]" />} label="ACME System 1 - R..." w={61} />
        <Task className="ml-[5px]" icon={<IE className="size-[13px]" />} label="ACME System 1 - R..." w={61} />
        <div className="ml-auto flex items-center gap-[4.400px]">
          {tray.map(([l, c], i) => <span key={i} className={"flex size-[9px] shrink-0 items-center justify-center text-[6px] font-bold leading-none text-white " + c}>{l}</span>)}
          <svg viewBox="0 0 10 7" className="h-[7px] w-[9px]"><path d="M2 7a2 2 0 0 1 0-4 3 3 0 0 1 5-1 2.500 2.500 0 0 1 1 5z" fill="#1683d8" /></svg>
          <BatteryCharging size={9} /><Wifi size={9} /><Volume2 size={9} />
        </div>
        <div className="ml-[6px] flex w-[33px] flex-col items-center"><T w={23}>1:06 PM</T><T w={33}>26/03/2020</T></div>
        <div className="relative ml-[8px] mr-[9px] h-[12px] w-[11px]">
          <span className="flex h-[8px] w-[9px] flex-col justify-center gap-px bg-white px-px"><i className="h-px bg-[#333]" /><i className="h-px bg-[#333]" /></span>
          <span className="absolute left-[4px] top-[4px] flex size-[9px] items-center justify-center rounded-full bg-[#444] text-[6px] font-bold leading-none">19</span>
        </div>
        <span className="mr-[3px] h-full w-px bg-[#555]" />
      </div>
    </section>
  );
}

export default function App() {
  return (
    <div className="flex h-[1080px] w-[3840px] overflow-hidden bg-black">
      <Browser />
      <Studio />
    </div>
  );
}
